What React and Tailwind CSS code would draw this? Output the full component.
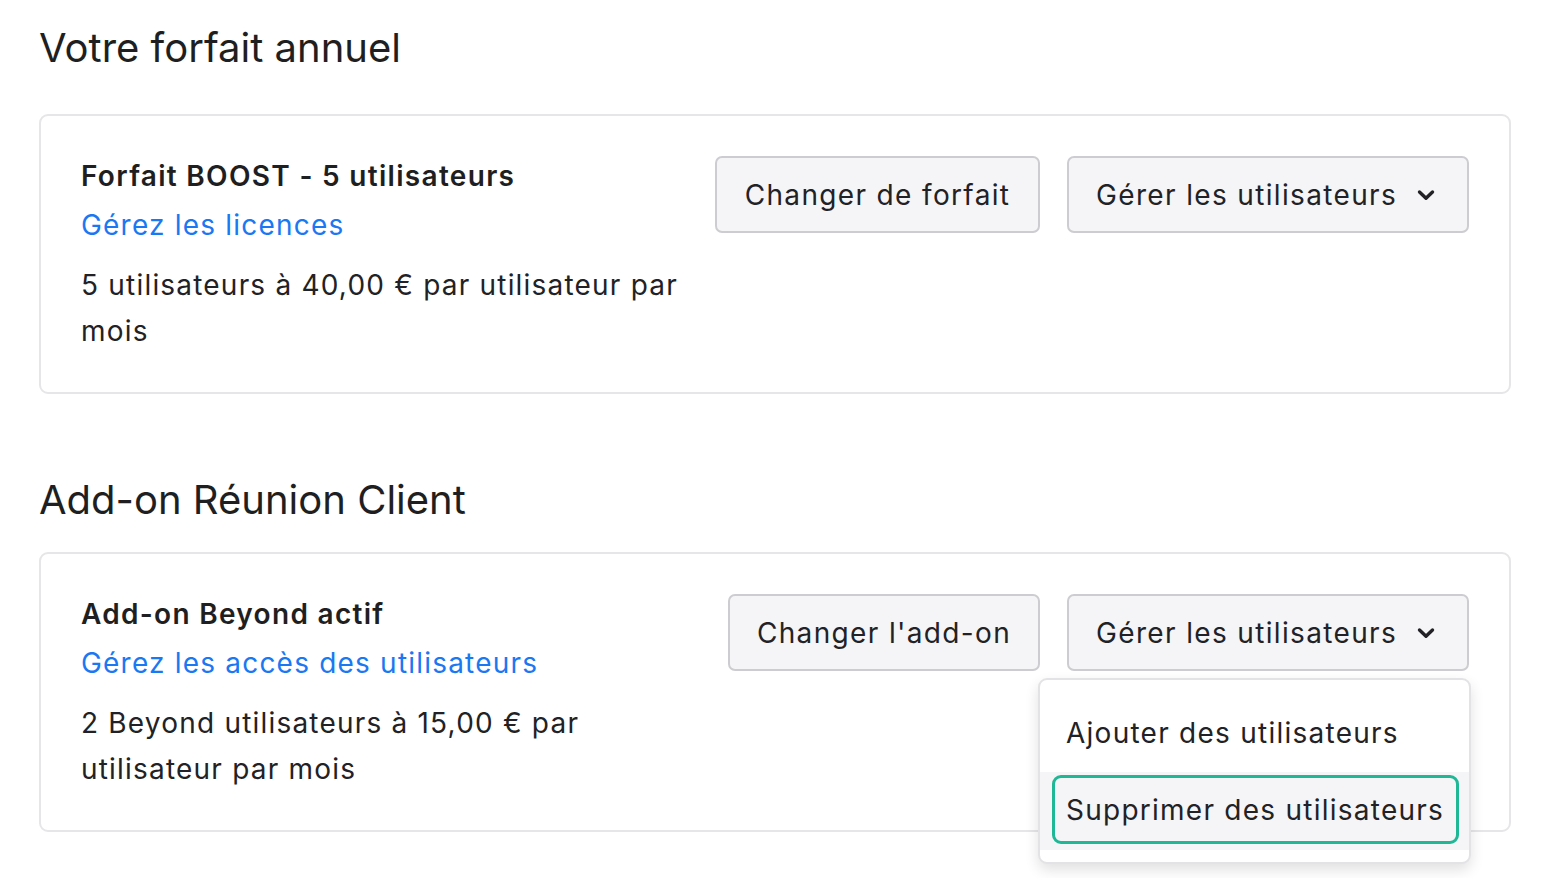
import React from 'react';

function Chevron() {
  return (
    <svg viewBox="0 0 20 20" className="w-[20px] h-[20px]" fill="none" stroke="#222226" strokeWidth="3.4" strokeLinecap="round" strokeLinejoin="round">
      <path d="M3.5 7l6.5 6.2 6.5-6.2" />
    </svg>
  );
}

function Button({ children, className = '' }) {
  return (
    <button className={`h-[77px] rounded-[7px] border-2 border-[#cdcdd1] bg-[#f5f5f7] text-[28px] tracking-[1.35px] text-[#222226] flex items-center ${className}`}>
      {children}
    </button>
  );
}

function PlanCard({ title, link, desc, leftBtn, leftBtnClass, menu }) {
  return (
    <div className="rounded-[9px] border-2 border-[#e6e6e8] px-[40px] pt-[40px] pb-[38px] flex gap-[24px]">
      <div className="flex-1 min-w-0">
        <div className="text-[28px] leading-[40px] tracking-[1.3px] font-semibold text-[#1f1f22]">{title}</div>
        <div className="text-[28px] leading-[40px] tracking-[1.2px] text-[#1a78f2] mt-[9px]">{link}</div>
        <div className="text-[28px] leading-[46px] tracking-[1.2px] text-[#222226] mt-[17px]">{desc}</div>
      </div>
      <div className="flex gap-[27px] shrink-0 items-start">
        <Button className={leftBtnClass}>{leftBtn}</Button>
        <div className="relative">
          <Button className="w-[402px] pl-[27px] pr-[31px] justify-between">
            <span>Gérer les utilisateurs</span>
            <Chevron />
          </Button>
          {menu && (
            <div className="absolute right-[-2px] top-[84px] w-[433px] bg-white border-2 border-[#e3e3e6] rounded-[9px] shadow-[0_6px_14px_rgba(0,0,0,0.12)] pt-[13px] pb-[12px] z-10">
              <div className="h-[79px] flex items-center pl-[26px] text-[28px] tracking-[1.25px] text-[#222226]">Ajouter des utilisateurs</div>
              <div className="h-[78px] bg-[#f5f5f7] pl-[12px] pr-[10px] pt-[3px] pb-[6px] flex">
                <div className="flex-1 border-[3px] border-[#1fb896] rounded-[9px] flex items-center pl-[11px] text-[28px] tracking-[1.25px] text-[#222226]">
                  Supprimer des utilisateurs
                </div>
              </div>
            </div>
          )}
        </div>
      </div>
    </div>
  );
}

export default function App() {
  return (
    <div className="min-h-[878px] bg-white pl-[39px] pr-[36px] pt-[24px] font-['Inter',sans-serif] text-[#222226]">
      <h1 className="text-[40px] leading-[48px] text-[#1f1f22]">Votre forfait annuel</h1>
      <div className="mt-[42px]">
        <PlanCard
          title="Forfait BOOST - 5 utilisateurs"
          link="Gérez les licences"
          desc="5 utilisateurs à 40,00 € par utilisateur par mois"
          leftBtn="Changer de forfait"
          leftBtnClass="w-[325px] justify-center"
        />
      </div>
      <h2 className="mt-[82px] text-[40px] leading-[48px] text-[#1f1f22]">Add-on Réunion Client</h2>
      <div className="mt-[28px]">
        <PlanCard
          title="Add-on Beyond actif"
          link="Gérez les accès des utilisateurs"
          desc="2 Beyond utilisateurs à 15,00 € par utilisateur par mois"
          leftBtn="Changer l'add-on"
          leftBtnClass="w-[312px] justify-center"
          menu
        />
      </div>
    </div>
  );
}
